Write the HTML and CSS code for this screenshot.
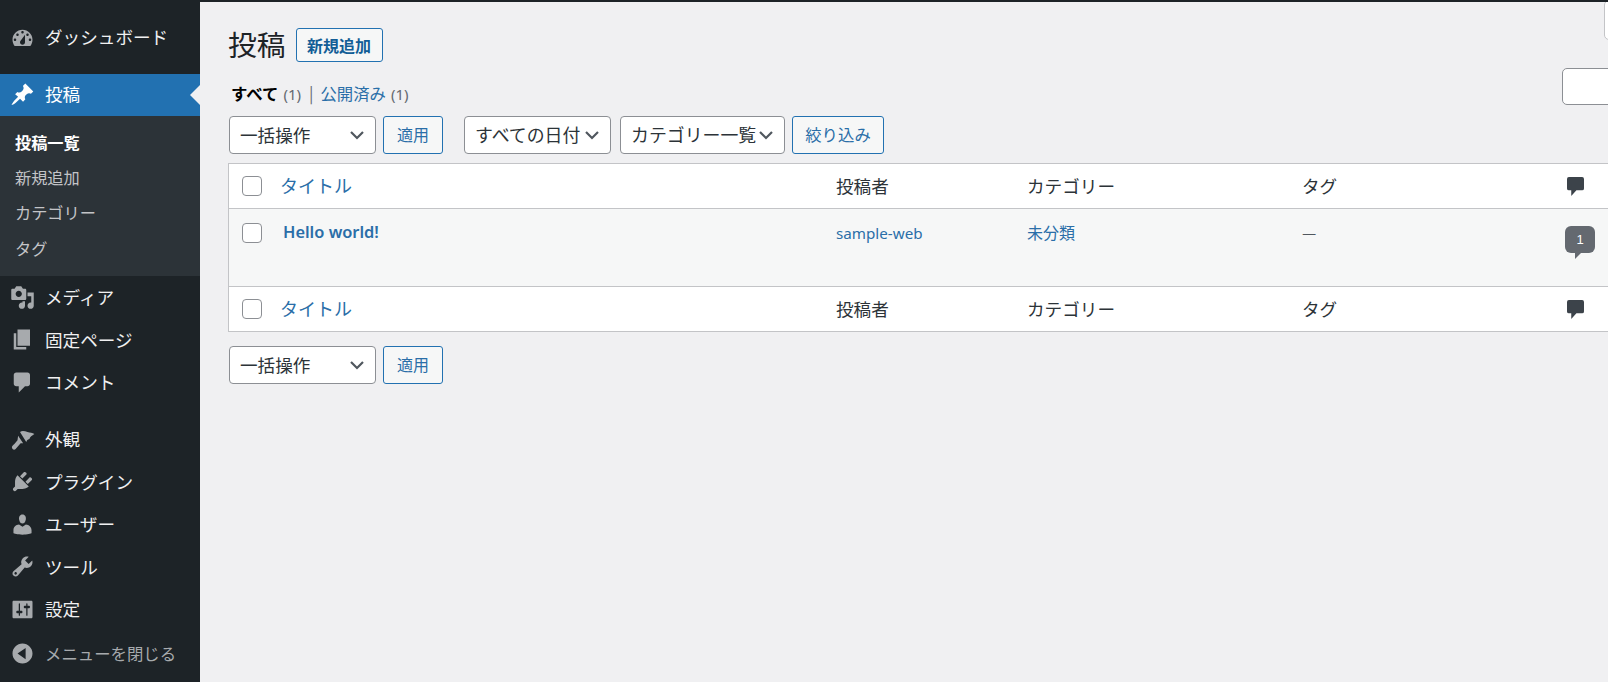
FILE: index.html
```html
<!DOCTYPE html>
<html lang="ja">

<head>
    <meta charset="UTF-8">
    <title>投稿</title>
    <link rel="stylesheet" href="styles.css">
</head>

<body>
    <nav class="sidebar">
        <a class="menu-item first">
            <svg class="icon" viewBox="0 0 20 20"><path fill-rule="evenodd" d="M3.760 16h12.480c1.100-1.370 1.760-3.110 1.760-5 0-4.420-3.580-8-8-8s-8 3.580-8 8c0 1.890.66 3.630 1.760 5zM10 4c.55 0 1 .45 1 1s-.45 1-1 1-1-.45-1-1 .45-1 1-1zM6 6c.55 0 1 .45 1 1s-.45 1-1 1-1-.45-1-1 .45-1 1-1zm8 0c.55 0 1 .45 1 1s-.45 1-1 1-1-.45-1-1 .45-1 1-1zm-5.370 5.550L12 7v6c0 1.100-.9 2-2 2s-2-.9-2-2c0-.57.24-1.080.63-1.450zM4 10c.55 0 1 .45 1 1s-.45 1-1 1-1-.45-1-1 .45-1 1-1zm12 0c.55 0 1 .45 1 1s-.45 1-1 1-1-.45-1-1 .45-1 1-1z"/></svg>
            <span>ダッシュボード</span>
        </a>
        <a class="menu-item active">
            <svg class="icon" viewBox="0 0 20 20"><path d="M10.440 3.020l1.820-1.820 6.360 6.350-1.830 1.820c-1.050-.68-2.480-.57-3.410.36l-.75.750c-.92.930-1.040 2.350-.35 3.410l-1.830 1.820-2.410-2.410-2.800 2.790c-.42.420-3.380 2.710-3.800 2.290s1.860-3.390 2.280-3.810l2.790-2.790L4.100 9.800l1.830-1.820c1.050.69 2.480.57 3.400-.36l.75-.750c.93-.92 1.050-2.350.36-3.400z"/></svg>
            <span>投稿</span>
        </a>
        <div class="submenu">
            <a class="sub-item current">投稿一覧</a>
            <a class="sub-item">新規追加</a>
            <a class="sub-item">カテゴリー</a>
            <a class="sub-item">タグ</a>
        </div>
        <a class="menu-item">
            <svg class="icon" viewBox="0 0 20 20"><path fill-rule="evenodd" d="M13 11V4c0-.55-.45-1-1-1h-1.670L9 1H5L3.670 3H2c-.55 0-1 .45-1 1v7c0 .55.45 1 1 1h10c.55 0 1-.45 1-1zM7 4.500c1.380 0 2.500 1.120 2.500 2.500S8.380 9.500 7 9.500 4.500 8.380 4.500 7 5.620 4.500 7 4.500zM14 6h5v10.500c0 1.380-1.120 2.500-2.500 2.500S14 17.880 14 16.500s1.120-2.500 2.500-2.500c.17 0 .34.020.5.050V9h-3V6zm-4 8.050V13h2v3.500c0 1.380-1.120 2.500-2.500 2.500S7 17.880 7 16.500 8.120 14 9.500 14c.17 0 .34.020.5.050z"/></svg>
            <span>メディア</span>
        </a>
        <a class="menu-item">
            <svg class="icon" viewBox="0 0 20 20"><path d="M6 15V2h10v13H6zm-1 1h8v2H3V5h2v11z"/></svg>
            <span>固定ページ</span>
        </a>
        <a class="menu-item">
            <svg class="icon" viewBox="0 0 20 20"><path d="M5 2h9c1.100 0 2 .9 2 2v7c0 1.100-.9 2-2 2h-2l-5 5v-5H5c-1.100 0-2-.9-2-2V4c0-1.100.9-2 2-2z"/></svg>
            <span>コメント</span>
        </a>
        <a class="menu-item group-start">
            <svg class="icon" viewBox="0 0 20 20"><path d="M8 4c2-1.500 4-.5 6 0s4 .5 5.500 1.500c-2 1.500-3.500 2-4 4-1.500.3-2 1-2.500 2.500z"/><path d="M6.500 7l4 6h-2l-4 4.500c-1 1.300-3 .5-3-1.500.3-1 1-1.500 2-2.500L6 10.500z"/></svg>
            <span>外観</span>
        </a>
        <a class="menu-item">
            <svg class="icon" viewBox="0 0 20 20"><path d="M13.110 4.360L9.870 7.600 8 5.730l3.240-3.240c.35-.34 1.050-.2 1.560.32.520.51.660 1.210.310 1.550zm-8 1.770l.91-1.120 9.010 9.010-1.190.84c-.71.710-2.630 1.160-3.820 1.160H6.140L4.900 17.260c-.59.590-1.540.59-2.120 0-.59-.58-.59-1.530 0-2.120l1.240-1.240v-3.880c0-1.130.46-3.050 1.090-3.890zm7.260 3.970l3.240-3.240c.34-.35 1.040-.21 1.550.31.520.51.660 1.210.31 1.550l-3.240 3.250z"/></svg>
            <span>プラグイン</span>
        </a>
        <a class="menu-item">
            <svg class="icon" viewBox="0 0 20 20"><path d="M10 9.250c-2.270 0-2.730-3.440-2.730-3.440C7 4.020 7.820 2 9.970 2c2.160 0 2.980 2.020 2.710 3.810 0 0-.41 3.440-2.680 3.440zm0 2.570L12.720 10c2.390 0 4.520 2.330 4.520 4.530v2.490s-3.650 1.130-7.240 1.130c-3.650 0-7.240-1.130-7.240-1.130v-2.490c0-2.250 1.940-4.480 4.460-4.480z"/></svg>
            <span>ユーザー</span>
        </a>
        <a class="menu-item">
            <svg class="icon" viewBox="0 0 20 20"><path fill-rule="evenodd" d="M16.680 9.770c-1.340 1.340-3.300 1.670-4.950.99l-5.410 6.520c-.99.990-2.590.990-3.570 0-.99-.98-.99-2.580 0-3.570l6.520-5.420c-.68-1.650-.35-3.610.99-4.950 1.280-1.280 3.120-1.620 4.720-1.060l-2.890 2.890 2.820 2.820 2.860-2.870c.53 1.580.18 3.390-1.090 4.650zM3.810 16.210c.4.390 1.030.39 1.420 0 .4-.4.4-1.030 0-1.430-.39-.39-1.020-.39-1.420 0-.39.4-.39 1.030 0 1.430z"/></svg>
            <span>ツール</span>
        </a>
        <a class="menu-item">
            <svg class="icon" viewBox="0 0 20 20"><path fill-rule="evenodd" d="M18 16V4c0-.55-.45-1-1-1H3c-.55 0-1 .45-1 1v12c0 .55.45 1 1 1h14c.55 0 1-.45 1-1zM8 11h1c.55 0 1 .45 1 1s-.45 1-1 1H8v1.500c0 .28-.22.500-.5.500s-.5-.22-.5-.5V13H6c-.55 0-1-.45-1-1s.45-1 1-1h1V5.500c0-.28.22-.5.5-.5s.5.220.5.5V11zm5-2h-1c-.55 0-1-.45-1-1s.45-1 1-1h1V5.500c0-.28.22-.5.5-.5s.5.220.5.5V7h1c.55 0 1 .45 1 1s-.45 1-1 1h-1v5.500c0 .28-.22.5-.5.5s-.5-.22-.5-.5V9z"/></svg>
            <span>設定</span>
        </a>
        <a class="menu-item collapse">
            <svg class="icon" viewBox="0 0 20 20"><path fill-rule="evenodd" d="M18 10c0-4.420-3.580-8-8-8s-8 3.580-8 8 3.580 8 8 8 8-3.580 8-8zm-5.500 4.500L6 10l6.500-4.500z"/></svg>
            <span>メニューを閉じる</span>
        </a>
    </nav>

    <main class="content">
        <div class="screen-tab"></div>
        <div class="heading">
            <h1>投稿</h1>
            <a class="add-new">新規追加</a>
        </div>
        <div class="views-row">
            <div class="views">
                <b>すべて</b>
                <span class="count">(1)</span>
                <span class="sep">|</span>
                <a class="publish">公開済み</a>
                <span class="count">(1)</span>
            </div>
            <div class="search-box"></div>
        </div>
        <div class="tablenav">
            <div class="select bulk">一括操作<svg class="chevron" viewBox="0 0 16 16"><path d="M2 5l6 6 6-6"/></svg></div>
            <a class="button">適用</a>
            <div class="select date">すべての日付<svg class="chevron" viewBox="0 0 16 16"><path d="M2 5l6 6 6-6"/></svg></div>
            <div class="select cat">カテゴリー一覧<svg class="chevron" viewBox="0 0 16 16"><path d="M2 5l6 6 6-6"/></svg></div>
            <a class="button filter">絞り込み</a>
        </div>

        <div class="posts">
            <div class="row head">
                <div class="check"><span class="checkbox"></span></div>
                <a class="col-title">タイトル</a>
                <div class="col-author">投稿者</div>
                <div class="col-cat">カテゴリー</div>
                <div class="col-tag">タグ</div>
                <div class="col-comment"><svg class="comment-icon" viewBox="0 0 18 20"><path d="M2 0h14a2 2 0 0 1 2 2v10a2 2 0 0 1-2 2H10l-5.500 6v-6H2a2 2 0 0 1-2-2V2a2 2 0 0 1 2-2z"/></svg></div>
            </div>
            <div class="row post">
                <div class="check"><span class="checkbox"></span></div>
                <a class="col-title post-title">Hello world!</a>
                <a class="col-author small">sample-web</a>
                <a class="col-cat post-cat">未分類</a>
                <div class="col-tag dash">—</div>
                <div class="col-comment"><span class="bubble">1</span></div>
            </div>
            <div class="row foot">
                <div class="check"><span class="checkbox"></span></div>
                <a class="col-title">タイトル</a>
                <div class="col-author">投稿者</div>
                <div class="col-cat">カテゴリー</div>
                <div class="col-tag">タグ</div>
                <div class="col-comment"><svg class="comment-icon" viewBox="0 0 18 20"><path d="M2 0h14a2 2 0 0 1 2 2v10a2 2 0 0 1-2 2H10l-5.500 6v-6H2a2 2 0 0 1-2-2V2a2 2 0 0 1 2-2z"/></svg></div>
            </div>
        </div>

        <div class="tablenav bottom">
            <div class="select bulk">一括操作<svg class="chevron" viewBox="0 0 16 16"><path d="M2 5l6 6 6-6"/></svg></div>
            <a class="button">適用</a>
        </div>
    </main>
</body>

</html>
```

FILE: styles.css
```css
* {
    box-sizing: border-box;
}

html,
body {
    height: 100%;
}

body {
    margin: 0;
    display: flex;
    width: 1608px;
    height: 682px;
    overflow: hidden;
    background-color: #f0f0f2;
    border-top: 2px solid #1d2327;
    font-family: "Noto Sans CJK JP", "Noto Sans", sans-serif;
    color: #3c434a;
}

a {
    color: #2271b1;
    text-decoration: none;
}

/* sidebar */
.sidebar {
    width: 200px;
    flex-shrink: 0;
    background-color: #1d2327;
    padding-top: 15px;
}

.menu-item {
    display: flex;
    align-items: center;
    height: 42.600px;
    padding-left: 10px;
    gap: 10px;
    font-size: 17.600px;
    color: #f0f0f1;
    position: relative;
}

.menu-item span {
    padding-bottom: 1px;
}

.menu-item.first span,
.menu-item.active span {
    padding-bottom: 3px;
}

.menu-item.first {
    margin-bottom: 14.400px;
}

.menu-item.active {
    height: 42px;
    background-color: #2271b1;
    color: #fff;
}

.menu-item.active::after {
    content: "";
    position: absolute;
    right: 0;
    top: 11px;
    border: 10px solid transparent;
    border-right-color: #f0f0f2;
    border-left-width: 0;
}

.menu-item.group-start {
    margin-top: 14px;
}

.menu-item.collapse {
    margin-top: 1px;
    font-size: 16.400px;
    color: #a7aaad;
}

.icon {
    width: 25px;
    height: 25px;
    fill: #a7aaad;
    flex-shrink: 0;
}

.menu-item.active .icon {
    fill: #fff;
}

.submenu {
    background-color: #2c3338;
    height: 160px;
    padding: 9px 0 0 15px;
}

.sub-item {
    display: block;
    height: 35.200px;
    line-height: 35.200px;
    font-size: 16.200px;
    color: #c3c4c7;
}

.sub-item.current {
    color: #fff;
    font-weight: 700;
}

/* content */
.content {
    flex: 1;
    min-width: 0;
    position: relative;
    padding: 26px 0 0 28px;
}

.screen-tab {
    position: absolute;
    top: -2px;
    right: -6px;
    width: 10px;
    height: 40px;
    background-color: #fff;
    border: 1px solid #c3c4c7;
    border-radius: 5px;
}

.heading {
    display: flex;
    align-items: center;
    gap: 10px;
    height: 34px;
}

.heading h1 {
    margin: -3px 0 0;
    font-size: 28.800px;
    font-weight: 400;
    color: #1d2327;
}

.add-new {
    display: block;
    width: 87px;
    height: 34px;
    line-height: 32px;
    text-align: center;
    font-size: 16px;
    font-weight: 700;
    color: #135e96;
    background-color: #f6f7f7;
    border: 1px solid #2271b1;
    border-radius: 3px;
}

.views-row {
    display: flex;
    justify-content: space-between;
    align-items: flex-start;
    margin-top: 6px;
    height: 48px;
}

.views {
    display: flex;
    align-items: baseline;
    margin-top: 13px;
    padding-left: 3px;
    font-size: 16.400px;
    color: #50575e;
}

.views b {
    color: #000;
}

.views .count {
    margin-left: 5px;
    color: #646970;
    font-family: "Noto Sans", sans-serif;
    font-size: 15px;
}

.views .sep {
    color: #646970;
    margin: 0 7px 0 8px;
}

.views .publish {
    color: #2a6ea8;
}

.search-box {
    width: 60px;
    height: 37px;
    margin-right: -14px;
    background-color: #fff;
    border: 1px solid #8c8f94;
    border-radius: 5px;
}

.tablenav {
    display: flex;
    gap: 7px;
    margin-left: 1px;
    height: 38px;
}

.tablenav.bottom {
    margin-top: 14px;
}

.select {
    display: flex;
    align-items: center;
    justify-content: space-between;
    height: 38px;
    padding: 0 10px 2px 10px;
    font-size: 17.600px;
    color: #2c3338;
    background-color: #fff;
    border: 1px solid #8c8f94;
    border-radius: 4px;
}

.select.bulk {
    width: 147px;
}

.select.date {
    width: 147px;
    margin-left: 14px;
    font-size: 17.900px;
    white-space: nowrap;
}

.select.cat {
    width: 165px;
    margin-left: 2px;
    font-size: 17.900px;
    white-space: nowrap;
}

.chevron {
    width: 16px;
    height: 16px;
    flex-shrink: 0;
    fill: none;
    stroke: #50575e;
    stroke-width: 2.200;
    margin-top: 2px;
}

.button {
    display: block;
    width: 60px;
    height: 38px;
    line-height: 35px;
    text-align: center;
    font-size: 16px;
    background-color: #f6f7f7;
    color: #2a6ea8;
    border: 1px solid #2271b1;
    border-radius: 3px;
}

.button.filter {
    width: 92px;
    font-size: 16.400px;
}

/* post table */
.posts {
    width: 1400px;
    margin-top: 9px;
    background-color: #fff;
    border: 1px solid #c3c4c7;
}

.row {
    display: grid;
    grid-template-columns: 51px 556px 191px 275px 264px 1fr;
    align-items: start;
    font-size: 17.600px;
    color: #2c3338;
}

.row.head,
.row.foot {
    height: 44px;
    align-items: center;
    padding-bottom: 2px;
}

.row.head {
    height: 45px;
    border-bottom: 1px solid #c3c4c7;
}

.row.head .check,
.row.foot .check,
.row.head .col-comment,
.row.foot .col-comment {
    position: relative;
    top: 1px;
}

.row.post {
    height: 78px;
    background-color: #f6f7f7;
    border-bottom: 1px solid #c3c4c7;
    padding-top: 11px;
}

.check {
    padding-left: 13px;
    display: flex;
}

.post .check {
    padding-top: 3px;
}

.checkbox {
    display: block;
    width: 20px;
    height: 20px;
    background-color: #fff;
    border: 1px solid #8c8f94;
    border-radius: 4px;
}

.col-title {
    font-size: 18px;
    color: #2a6ea8;
}

.post-title {
    padding-left: 3px;
    font-family: "Noto Sans", sans-serif;
    font-size: 16.400px;
    font-weight: 600;
    line-height: 24px;
}

.col-author.small {
    padding-top: 1px;
    font-family: "Noto Sans", sans-serif;
    font-size: 15.200px;
    line-height: 24px;
    color: #2a6ea8;
}

.post-cat {
    font-size: 16px;
    line-height: 24px;
    color: #2a6ea8;
}

.dash {
    font-size: 16px;
    line-height: 24px;
    color: #50575e;
}

.col-comment {
    display: flex;
    padding-left: 1px;
}

.comment-icon {
    width: 17px;
    height: 21px;
    fill: #3c434a;
}

.bubble {
    display: block;
    position: relative;
    width: 30px;
    height: 27px;
    line-height: 27px;
    margin: 6px 0 0 -2px;
    text-align: center;
    font-family: "Liberation Sans", sans-serif;
    font-size: 13px;
    color: #fff;
    background-color: #646970;
    border-radius: 6px;
}

.bubble::after {
    content: "";
    position: absolute;
    left: 10px;
    top: 27px;
    border-top: 6px solid #646970;
    border-right: 6px solid transparent;
}
```
